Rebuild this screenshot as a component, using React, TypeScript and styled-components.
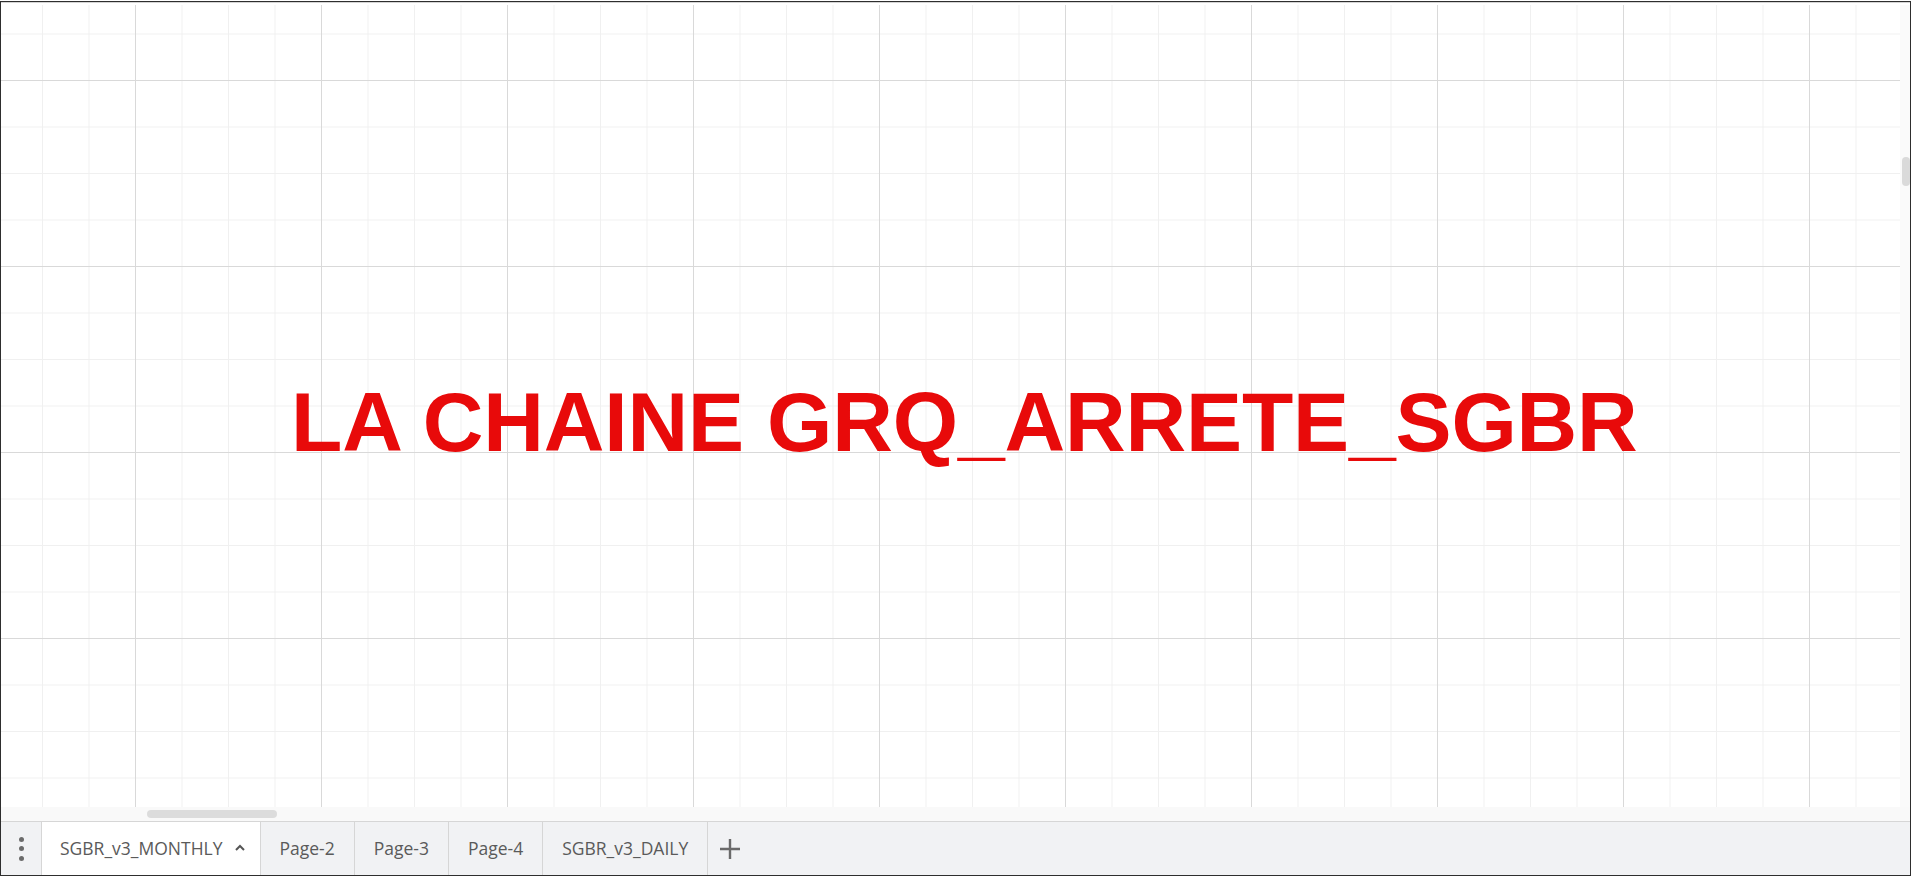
import React from "react";
import styled, { createGlobalStyle } from "styled-components";

const Global = createGlobalStyle`
  html, body { margin: 0; padding: 0; background: #ffffff; overflow: hidden; }
  * { box-sizing: border-box; }
`;

const Frame = styled.div`
  margin-top: 1px;
  width: 1911px;
  height: 875px;
  border: 1px solid #2e2e2e;
  display: flex;
  flex-direction: column;
  background: #ffffff;
`;

const TopEdge = styled.div`
  height: 3px;
  border-top: 1px solid #d4d4d4;
  flex: none;
`;

const Main = styled.div`
  height: 802px;
  display: flex;
  flex: none;
`;

const Canvas = styled.div`
  position: relative;
  flex: 1;
  overflow: hidden;
  background-color: #ffffff;
  background-image:
    linear-gradient(to right, #d9d9d9 1px, transparent 1px),
    linear-gradient(to bottom, #d9d9d9 1px, transparent 1px),
    linear-gradient(to right, #f0f0f0 1px, transparent 1px),
    linear-gradient(to bottom, #f0f0f0 1px, transparent 1px);
  background-size: 186px 186px, 186px 186px, 46.5px 46.5px, 46.5px 46.5px;
  background-position: 134px 0, 0 75px, 41px 0, 0 28.5px;
`;

const Title = styled.div`
  position: absolute;
  left: 290px;
  top: 375px;
  font-family: "Liberation Sans", Arial, sans-serif;
  font-weight: 700;
  font-size: 84px;
  line-height: 84px;
  letter-spacing: -0.15px;
  color: #e80a0a;
  white-space: nowrap;
`;

const VScroll = styled.div`
  width: 10px;
  flex: none;
  background: #fafafa;
  padding-left: 2px;
`;

const VThumb = styled.div`
  margin-top: 152px;
  width: 8px;
  height: 29px;
  border-radius: 4px;
  background: #dadada;
`;

const HScroll = styled.div`
  height: 14px;
  flex: none;
  background: #f9f9f9;
  padding: 3px 0 0 146px;
`;

const HThumb = styled.div`
  width: 130px;
  height: 8px;
  border-radius: 4px;
  background: #dcdcdc;
`;

const TabBar = styled.div`
  flex: 1;
  display: flex;
  align-items: stretch;
  background: #f1f2f4;
  border-top: 1px solid #d6d6d6;
  font-family: "Open Sans", "Segoe UI", sans-serif;
  font-size: 17.5px;
  color: #5a5a5a;
`;

const MenuButton = styled.div`
  width: 41px;
  flex: none;
  border-right: 1px solid #d6d6d6;
  display: flex;
  flex-direction: column;
  align-items: center;
  justify-content: center;
  gap: 4.5px;
`;

const Dot = styled.span`
  width: 5px;
  height: 5px;
  border-radius: 50%;
  background: #6b6b6b;
`;

const Tab = styled.div<{ $active?: boolean }>`
  display: flex;
  align-items: center;
  gap: 12px;
  padding: 0 ${(p) => (p.$active ? "15px" : "19px")} 2px ${(p) => (p.$active ? "18px" : "19px")};
  border-right: 1px solid #d6d6d6;
  background: ${(p) => (p.$active ? "#ffffff" : "transparent")};
  white-space: nowrap;
`;

const AddButton = styled.div`
  width: 44px;
  display: flex;
  align-items: center;
  justify-content: center;
`;

export default function App() {
  const tabs = ["Page-2", "Page-3", "Page-4", "SGBR_v3_DAILY"];
  return (
    <>
      <Global />
      <Frame>
        <TopEdge />
        <Main>
          <Canvas>
            <Title>LA CHAINE GRQ_ARRETE_SGBR</Title>
          </Canvas>
          <VScroll>
            <VThumb />
          </VScroll>
        </Main>
        <HScroll>
          <HThumb />
        </HScroll>
        <TabBar>
          <MenuButton>
            <Dot />
            <Dot />
            <Dot />
          </MenuButton>
          <Tab $active>
            SGBR_v3_MONTHLY
            <svg width="10" height="7" viewBox="0 0 10 7">
              <polyline points="1,6 5,2 9,6" fill="none" stroke="#555" strokeWidth="2" />
            </svg>
          </Tab>
          {tabs.map((t) => (
            <Tab key={t}>{t}</Tab>
          ))}
          <AddButton>
            <svg width="22" height="22" viewBox="0 0 22 22">
              <path d="M11 1v20M1 11h20" stroke="#6a6a6a" strokeWidth="2.4" />
            </svg>
          </AddButton>
        </TabBar>
      </Frame>
    </>
  );
}
